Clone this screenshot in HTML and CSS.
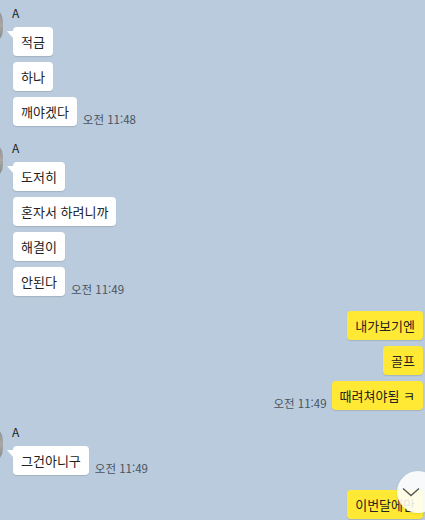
FILE: index.html
```html
<!DOCTYPE html>
<html lang="ko">
<head>
    <meta charset="UTF-8">
    <meta name="viewport" content="width=device-width, initial-scale=1.0">
    <title>채팅</title>
    <link rel="stylesheet" href="styles.css">
</head>
<body>
    <div class="chat">
        <div class="group">
            <div class="avatar"></div>
            <div class="name">A</div>
            <div class="row"><div class="bubble first">적금</div></div>
            <div class="row"><div class="bubble">하나</div></div>
            <div class="row"><div class="bubble">깨야겠다</div><span class="time">오전 11:48</span></div>
        </div>

        <div class="group">
            <div class="avatar"></div>
            <div class="name">A</div>
            <div class="row"><div class="bubble first">도저히</div></div>
            <div class="row"><div class="bubble">혼자서 하려니까</div></div>
            <div class="row"><div class="bubble">해결이</div></div>
            <div class="row"><div class="bubble">안된다</div><span class="time">오전 11:49</span></div>
        </div>

        <div class="group mine">
            <div class="row"><div class="bubble">내가보기엔</div></div>
            <div class="row"><div class="bubble">골프</div></div>
            <div class="row"><span class="time">오전 11:49</span><div class="bubble">때려쳐야됨 ㅋ</div></div>
        </div>

        <div class="group">
            <div class="avatar"></div>
            <div class="name">A</div>
            <div class="row"><div class="bubble first">그건아니구</div><span class="time">오전 11:49</span></div>
        </div>

        <div class="group mine">
            <div class="row"><div class="bubble">이번달에만</div></div>
        </div>
    </div>

    <button class="scroll-down" aria-label="아래로">
        <svg width="18" height="10" viewBox="0 0 18 10">
            <path d="M1 1.5 L9 8.5 L17 1.5" fill="none" stroke="#555" stroke-width="1.4"/>
        </svg>
    </button>
</body>
</html>
```

FILE: styles.css
```css
html, body {
    height: 100%;
}

body {
    margin: 0;
    overflow: hidden;
    background-color: #b9cbdc;
    font-family: "Noto Sans CJK KR", "Liberation Sans", sans-serif;
    color: #222;
}

.chat {
    padding: 6px 2px 0 13px;
}

.group {
    position: relative;
    display: flex;
    flex-direction: column;
    gap: 6px;
    margin-bottom: 15px;
}

.avatar {
    position: absolute;
    left: -47px;
    top: 1px;
    width: 37px;
    height: 37px;
    border-radius: 14px;
    background: linear-gradient(180deg, #8d8d90, #a9a7a5 50%, #7f8084);
}

.name {
    margin-left: -1px;
    margin-bottom: 1px;
    font-size: 12px;
    line-height: 14px;
    color: #222;
}

.row {
    display: flex;
    align-items: flex-end;
    gap: 6px;
}

.mine .row {
    justify-content: flex-end;
    gap: 5px;
}

.bubble {
    position: relative;
    padding: 6px 8px;
    font-size: 13px;
    line-height: 17px;
    background-color: #fff;
    border-radius: 4px;
    box-shadow: 0 1px 1px rgba(0, 0, 0, 0.12);
    white-space: nowrap;
}

.mine .bubble {
    background-color: #ffe934;
}

.bubble.first::before {
    content: "";
    position: absolute;
    left: -6px;
    top: 4px;
    width: 0;
    height: 0;
    border-top: 7px solid #fff;
    border-left: 6px solid transparent;
}

.time {
    font-size: 11.5px;
    line-height: 14px;
    color: #4a5360;
    white-space: nowrap;
}

.scroll-down {
    position: fixed;
    right: -14px;
    bottom: 7px;
    width: 42px;
    height: 42px;
    padding: 0 14px 0 0;
    border: none;
    border-radius: 50%;
    background-color: rgba(255, 255, 255, 0.88);
    box-shadow: 0 1px 3px rgba(0, 0, 0, 0.1);
    display: flex;
    align-items: center;
    justify-content: center;
    cursor: pointer;
}
```
